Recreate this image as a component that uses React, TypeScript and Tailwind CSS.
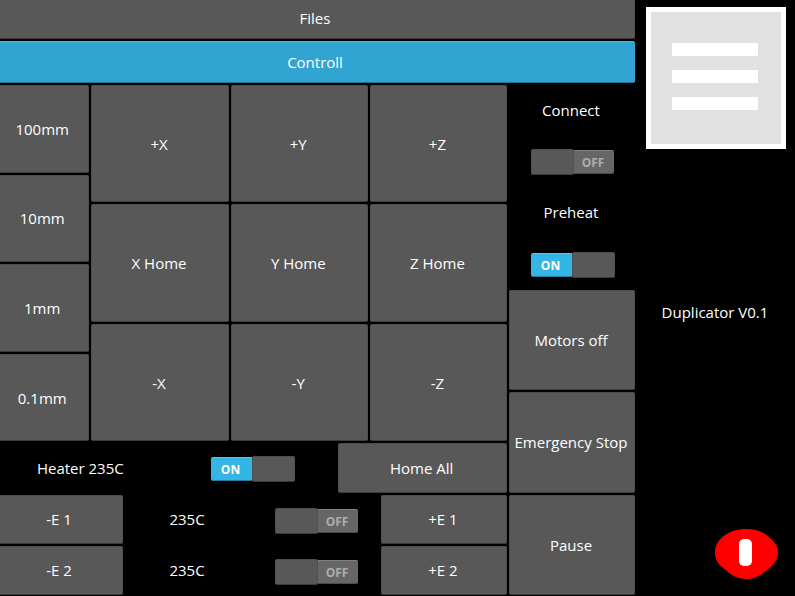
import { useState } from "react";
import clsx from "clsx";

type PadProps = { children: string; active?: boolean; className?: string };

function Pad({ children, active = false, className }: PadProps) {
  return (
    <button
      type="button"
      className={clsx(
        "m-px min-h-0 min-w-0 rounded-xs border pr-0.5 text-center whitespace-nowrap",
        active
          ? "border-x-[#32a4d1] border-t-[#5bb8dc] border-b-[#22739a] bg-[#32a4d1]"
          : "border-x-[#505050] border-t-[#4e4e4e] border-b-[#3c3c3c] bg-[#585858]",
        className,
      )}
    >
      {children}
    </button>
  );
}

function Toggle({ name, initial = false }: { name: string; initial?: boolean }) {
  const [on, setOn] = useState(initial);
  return (
    <label className="flex items-center justify-center pt-[3px] pl-0.5">
      <input
        type="checkbox"
        role="switch"
        aria-label={name}
        checked={on}
        onChange={() => setOn(!on)}
        className="size-0 appearance-none"
      />
      <span
        aria-hidden="true"
        className={clsx(
          "flex w-[84px] items-center text-[12px] leading-6 font-bold",
          on && "flex-row-reverse",
        )}
      >
        <span className="h-[26px] w-[43px] rounded-xs border border-t-[#4e4e4e] border-x-[#505050] border-b-[#3c3c3c] bg-[#585858]" />
        <span
          className={clsx(
            "h-6 border-y text-center",
            on
              ? "w-[41px] rounded-l-xs border-t-[#5bc3ea] border-b-[#2480a3] bg-[#33b5e5] pr-0.5 text-white"
              : "w-10 rounded-r-xs border-t-[#808080] border-b-[#4a4a4a] bg-[#666666] pr-0.5 text-[#adadad]",
          )}
        >
          {on ? "ON" : "OFF"}
        </span>
      </span>
    </label>
  );
}

function Caption({ children, className }: { children: string; className?: string }) {
  return (
    <span className={clsx("flex items-center justify-center pr-0.5 whitespace-nowrap", className)}>
      {children}
    </span>
  );
}

const distances = ["100mm", "10mm", "1mm", "0.1mm"];
const moves = ["+X", "+Y", "+Z", "X Home", "Y Home", "Z Home", "-X", "-Y", "-Z"];
const extruders = ["1", "2"];

export default function App() {
  return (
    <div className="h-screen overflow-hidden bg-black font-['Open_Sans','Noto_Sans',sans-serif] text-[15px] leading-5 text-white">
      <div className="-mt-1 -mr-px -ml-1 flex h-[calc(100vh+4px)]">
        <main className="flex min-w-0 flex-4 flex-col">
          <nav className="grid grid-rows-[44px_44px]">
            <Pad>Files</Pad>
            <Pad active>Controll</Pad>
          </nav>

          <div className="flex min-h-0 flex-1">
            <section className="grid min-w-0 flex-4 grid-rows-[7fr_1fr_1fr_1fr]">
              <div className="grid min-h-0 grid-cols-[19fr_84fr]">
                <div className="grid grid-rows-4">
                  {distances.map((d) => (
                    <Pad key={d}>{d}</Pad>
                  ))}
                </div>
                <div className="grid grid-cols-3 grid-rows-3">
                  {moves.map((m) => (
                    <Pad key={m}>{m}</Pad>
                  ))}
                </div>
              </div>

              <div className="grid min-h-0 grid-cols-3">
                <Caption>Heater 235C</Caption>
                <Toggle name="Heater" initial />
                <Pad>Home All</Pad>
              </div>

              {extruders.map((n) => (
                <div key={n} className="grid min-h-0 grid-cols-4">
                  <Pad>{`-E ${n}`}</Pad>
                  <Caption>235C</Caption>
                  <Toggle name={`Extruder ${n}`} />
                  <Pad>{`+E ${n}`}</Pad>
                </div>
              ))}
            </section>

            <section className="grid min-w-0 flex-1 grid-rows-10">
              <Caption>Connect</Caption>
              <Toggle name="Connect" />
              <Caption>Preheat</Caption>
              <Toggle name="Preheat" initial />
              <Pad className="row-span-2">Motors off</Pad>
              <Pad className="row-span-2">Emergency Stop</Pad>
              <Pad className="row-span-2">Pause</Pad>
            </section>
          </div>
        </main>

        <aside className="flex min-w-0 flex-1 flex-col">
          <div className="h-40 px-2.5 pt-[11px]">
            <button
              type="button"
              aria-label="Menu"
              className="flex h-[142px] w-full flex-col items-center justify-center gap-3.5 border-[5px] border-white bg-[#e1e1e1] pr-0.5 pb-1"
            >
              <span className="h-[13px] w-[86px] bg-white" />
              <span className="h-[13px] w-[86px] bg-white" />
              <span className="h-[13px] w-[86px] bg-white" />
            </button>
          </div>
          <Caption className="flex-1">Duplicator V0.1</Caption>
          <div className="flex h-32 items-end justify-end pr-[18px] pb-[17px]">
            <button type="button" aria-label="Stop print">
              <svg width="63" height="50" viewBox="0 0 63 50" className="block">
                <path
                  d="M31 0C42 0 50 3.500 55 9C60 13 63 18 63 23.500C63 31 58 36.500 52 41C46 46 40 50 31 50C22 50 16 46 11 41C4 36.500 0 31 0 23.500C0 10 14 0 31 0Z"
                  fill="#ff0000"
                />
                <rect x="24" y="10" width="13" height="27" rx="5" fill="#ffffff" />
              </svg>
            </button>
          </div>
        </aside>
      </div>
    </div>
  );
}
